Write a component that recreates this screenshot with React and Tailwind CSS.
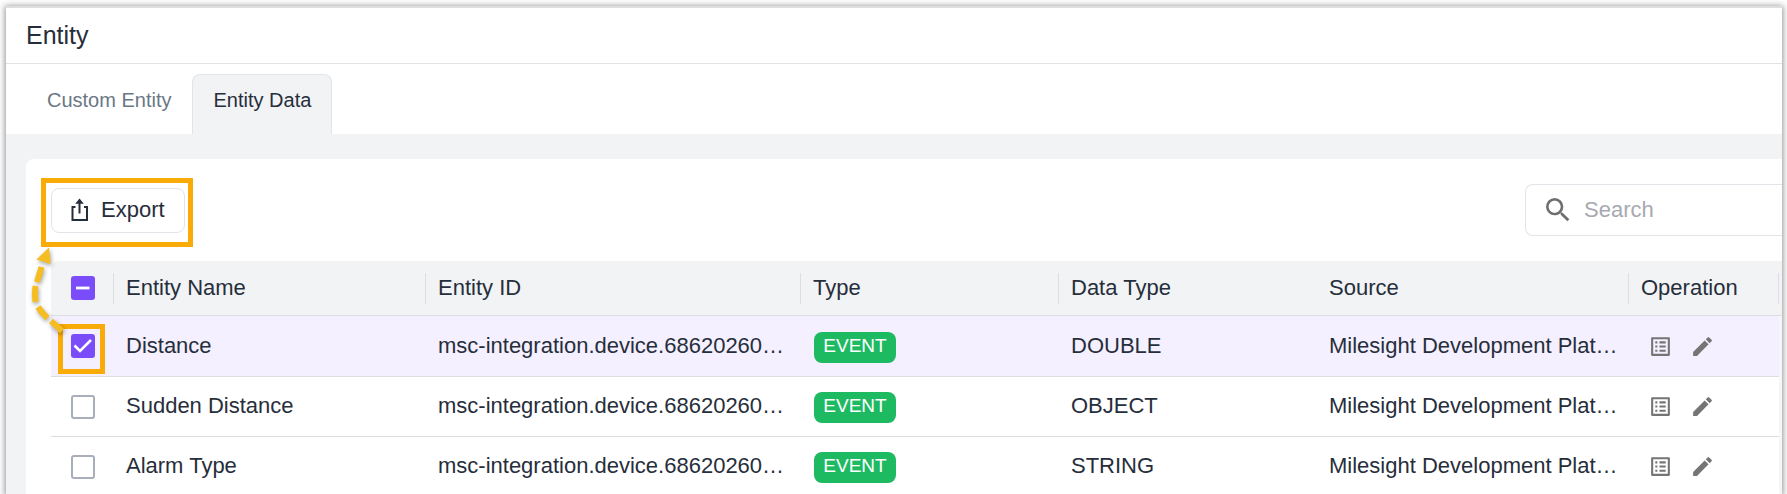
import { useEffect, useRef } from "react";
import { MdSearch, MdEdit, MdOutlineListAlt } from "react-icons/md";

const rows = [
  { name: "Distance", dataType: "DOUBLE", checked: true },
  { name: "Sudden Distance", dataType: "OBJECT", checked: false },
  { name: "Alarm Type", dataType: "STRING", checked: false },
];

const entityId = "msc-integration.device.68620260…";
const source = "Milesight Development Plat…";

function Box({ label, checked = false, mixed = false }) {
  const ref = useRef(null);
  useEffect(() => {
    if (ref.current) ref.current.indeterminate = mixed;
  }, [mixed]);
  const filled = checked || mixed;
  return (
    <label className="grid size-6 place-items-center">
      <input
        ref={ref}
        type="checkbox"
        aria-label={label}
        defaultChecked={checked}
        className={
          filled
            ? "col-start-1 row-start-1 size-6 appearance-none rounded-[3px] bg-[#7b4dfa]"
            : "col-start-1 row-start-1 size-6 appearance-none rounded-[3px] border-2 border-[#a9aebb] bg-white"
        }
      />
      {filled && (
        <svg viewBox="0 0 24 24" className="pointer-events-none col-start-1 row-start-1 size-6" fill="none" stroke="#fff">
          {mixed ? (
            <path d="M5 12H18.500" strokeWidth="2.800" />
          ) : (
            <path d="M3.500 11.500L9 17L20 6" strokeWidth="2.600" />
          )}
        </svg>
      )}
    </label>
  );
}

function Head({ children, divider = true }) {
  return (
    <th scope="col" className="border-b border-[#dcdee2] p-0 text-left font-normal">
      <div className={divider ? "flex h-[31px] items-center border-r border-[#dcdee2] px-3 pb-[2px]" : "flex h-[31px] items-center px-3 pb-[2px]"}>
        {children}
      </div>
    </th>
  );
}

function Cell({ children }) {
  return <td className="truncate pr-0 pb-[2px] pl-3">{children}</td>;
}

export default function App() {
  return (
    <div className="min-h-screen overflow-hidden bg-[#fdfdfd] pt-2 pr-[5px] pl-[6px] font-['Liberation_Sans',Arial,sans-serif] text-[#272e3b]">
      <main className="min-h-[calc(100vh-8px)] bg-[#f1f3f5] shadow-[0_-2px_0_0_#dedede,0_-1px_6px_1px_rgba(0,0,0,0.42)]">
        <header className="flex h-14 items-center border-b border-[#e2e3e7] bg-white px-5">
          <h1 className="text-[25px]">Entity</h1>
        </header>

        <nav className="flex h-[70px] items-end bg-white px-5 text-xl">
          <button type="button" className="h-[60px] border border-b-0 border-transparent px-5 pb-[9px] text-[#6b7785]">Custom Entity</button>
          <button type="button" className="h-[60px] rounded-t-lg border border-b-0 border-[#e2e4ea] bg-[#f1f3f5] px-5 pb-[9px]">Entity Data</button>
        </nav>

        <section className="mt-[25px] ml-5 rounded-tl-lg bg-white pt-[25px] pl-[25px] text-[22px]">
          <div className="flex items-center justify-between">
            <div className="relative">
              <button type="button" className="flex h-[45px] items-center gap-[10px] rounded-lg border border-[#e2e4ea] bg-white pr-[19px] pl-[15px]">
                <svg viewBox="0 0 24 24" className="size-6" fill="none" stroke="#272e3b" strokeWidth="2">
                  <path d="M8.500 9H5.500V22H20V9H17M12.500 15.500V3" />
                  <path d="M12.500 0.600L8.200 5.800H16.800Z" fill="#272e3b" stroke="none" />
                </svg>
                <span className="pb-[2px]">Export</span>
              </button>
              <div className="pointer-events-none absolute -top-[10px] -right-2 -bottom-[14px] -left-[10px] border-5 border-[#f9ab08]" />
            </div>
            <label className="flex h-[52px] w-[257px] items-center gap-[10px] rounded-l-lg border border-r-0 border-[#e2e4ea] pl-4">
              <MdSearch className="size-8 shrink-0 text-[#6f6f6f]" />
              <input type="text" placeholder="Search" aria-label="Search" className="w-full min-w-0 pb-[2px] outline-none placeholder:text-[#a7a9b0]" />
            </label>
          </div>

          <div className="relative mt-[25px] rounded-tl-lg bg-[linear-gradient(#f1f3f5_54px,#dcdee2_54px,#dcdee2_55px,#f6f6f7_55px)] pr-[3px]">
            <table className="w-full table-fixed border-separate border-spacing-0">
              <colgroup>
                <col className="w-[63px]" />
                <col className="w-[312px]" />
                <col className="w-[375px]" />
                <col className="w-[258px]" />
                <col className="w-[258px]" />
                <col className="w-[312px]" />
                <col className="w-[150px]" />
              </colgroup>
              <thead>
                <tr className="h-[55px]">
                  <th scope="col" className="border-b border-[#dcdee2] p-0">
                    <div className="flex h-[31px] items-center border-r border-[#dcdee2] pl-5">
                      <Box label="Select all" mixed />
                    </div>
                  </th>
                  <Head>Entity Name</Head>
                  <Head>Entity ID</Head>
                  <Head>Type</Head>
                  <Head divider={false}>Data Type</Head>
                  <Head>Source</Head>
                  <Head>Operation</Head>
                </tr>
              </thead>
              <tbody>
                {rows.map((row) => (
                  <tr
                    key={row.name}
                    className={row.checked ? "h-[60px] bg-[#f4f0ff]" : "h-[60px] bg-white *:border-t *:border-[#dcdee2]"}
                  >
                    <td className="pl-5"><Box label={"Select " + row.name} checked={row.checked} /></td>
                    <Cell>{row.name}</Cell>
                    <Cell>{entityId}</Cell>
                    <td className="pt-[2px] pl-[13px]">
                      <span className="flex h-[31px] w-[82px] items-center justify-center rounded-lg bg-[#1eba62] pb-[2px] text-[19px] text-white">EVENT</span>
                    </td>
                    <Cell>{row.dataType}</Cell>
                    <Cell>{source}</Cell>
                    <td className="pl-[19px]">
                      <div className="flex items-center gap-[17px] text-[#757575]">
                        <button type="button" aria-label="Details"><MdOutlineListAlt className="size-[25px]" /></button>
                        <button type="button" aria-label="Edit"><MdEdit className="size-[25px]" /></button>
                      </div>
                    </td>
                  </tr>
                ))}
              </tbody>
            </table>
            <div className="pointer-events-none absolute top-[63px] left-[7px] h-[50px] w-[47px] border-5 border-[#f9ab08]" />
            <svg
              viewBox="0 0 50 90"
              className="pointer-events-none absolute -top-[15px] -left-[25px] h-[90px] w-[50px] drop-shadow-[1px_2px_2px_rgba(0,0,0,0.35)]"
            >
              <path
                d="M15.500 21L11 36M9.500 40Q8.200 48 9.500 56M12 61Q16 67 21.500 72M25 75L36 85"
                fill="none"
                stroke="#f5bd21"
                strokeWidth="6"
              />
              <path d="M23 1.500L24.800 18L10.500 13.500Z" fill="#f5bd21" />
            </svg>
          </div>
        </section>
      </main>
    </div>
  );
}
